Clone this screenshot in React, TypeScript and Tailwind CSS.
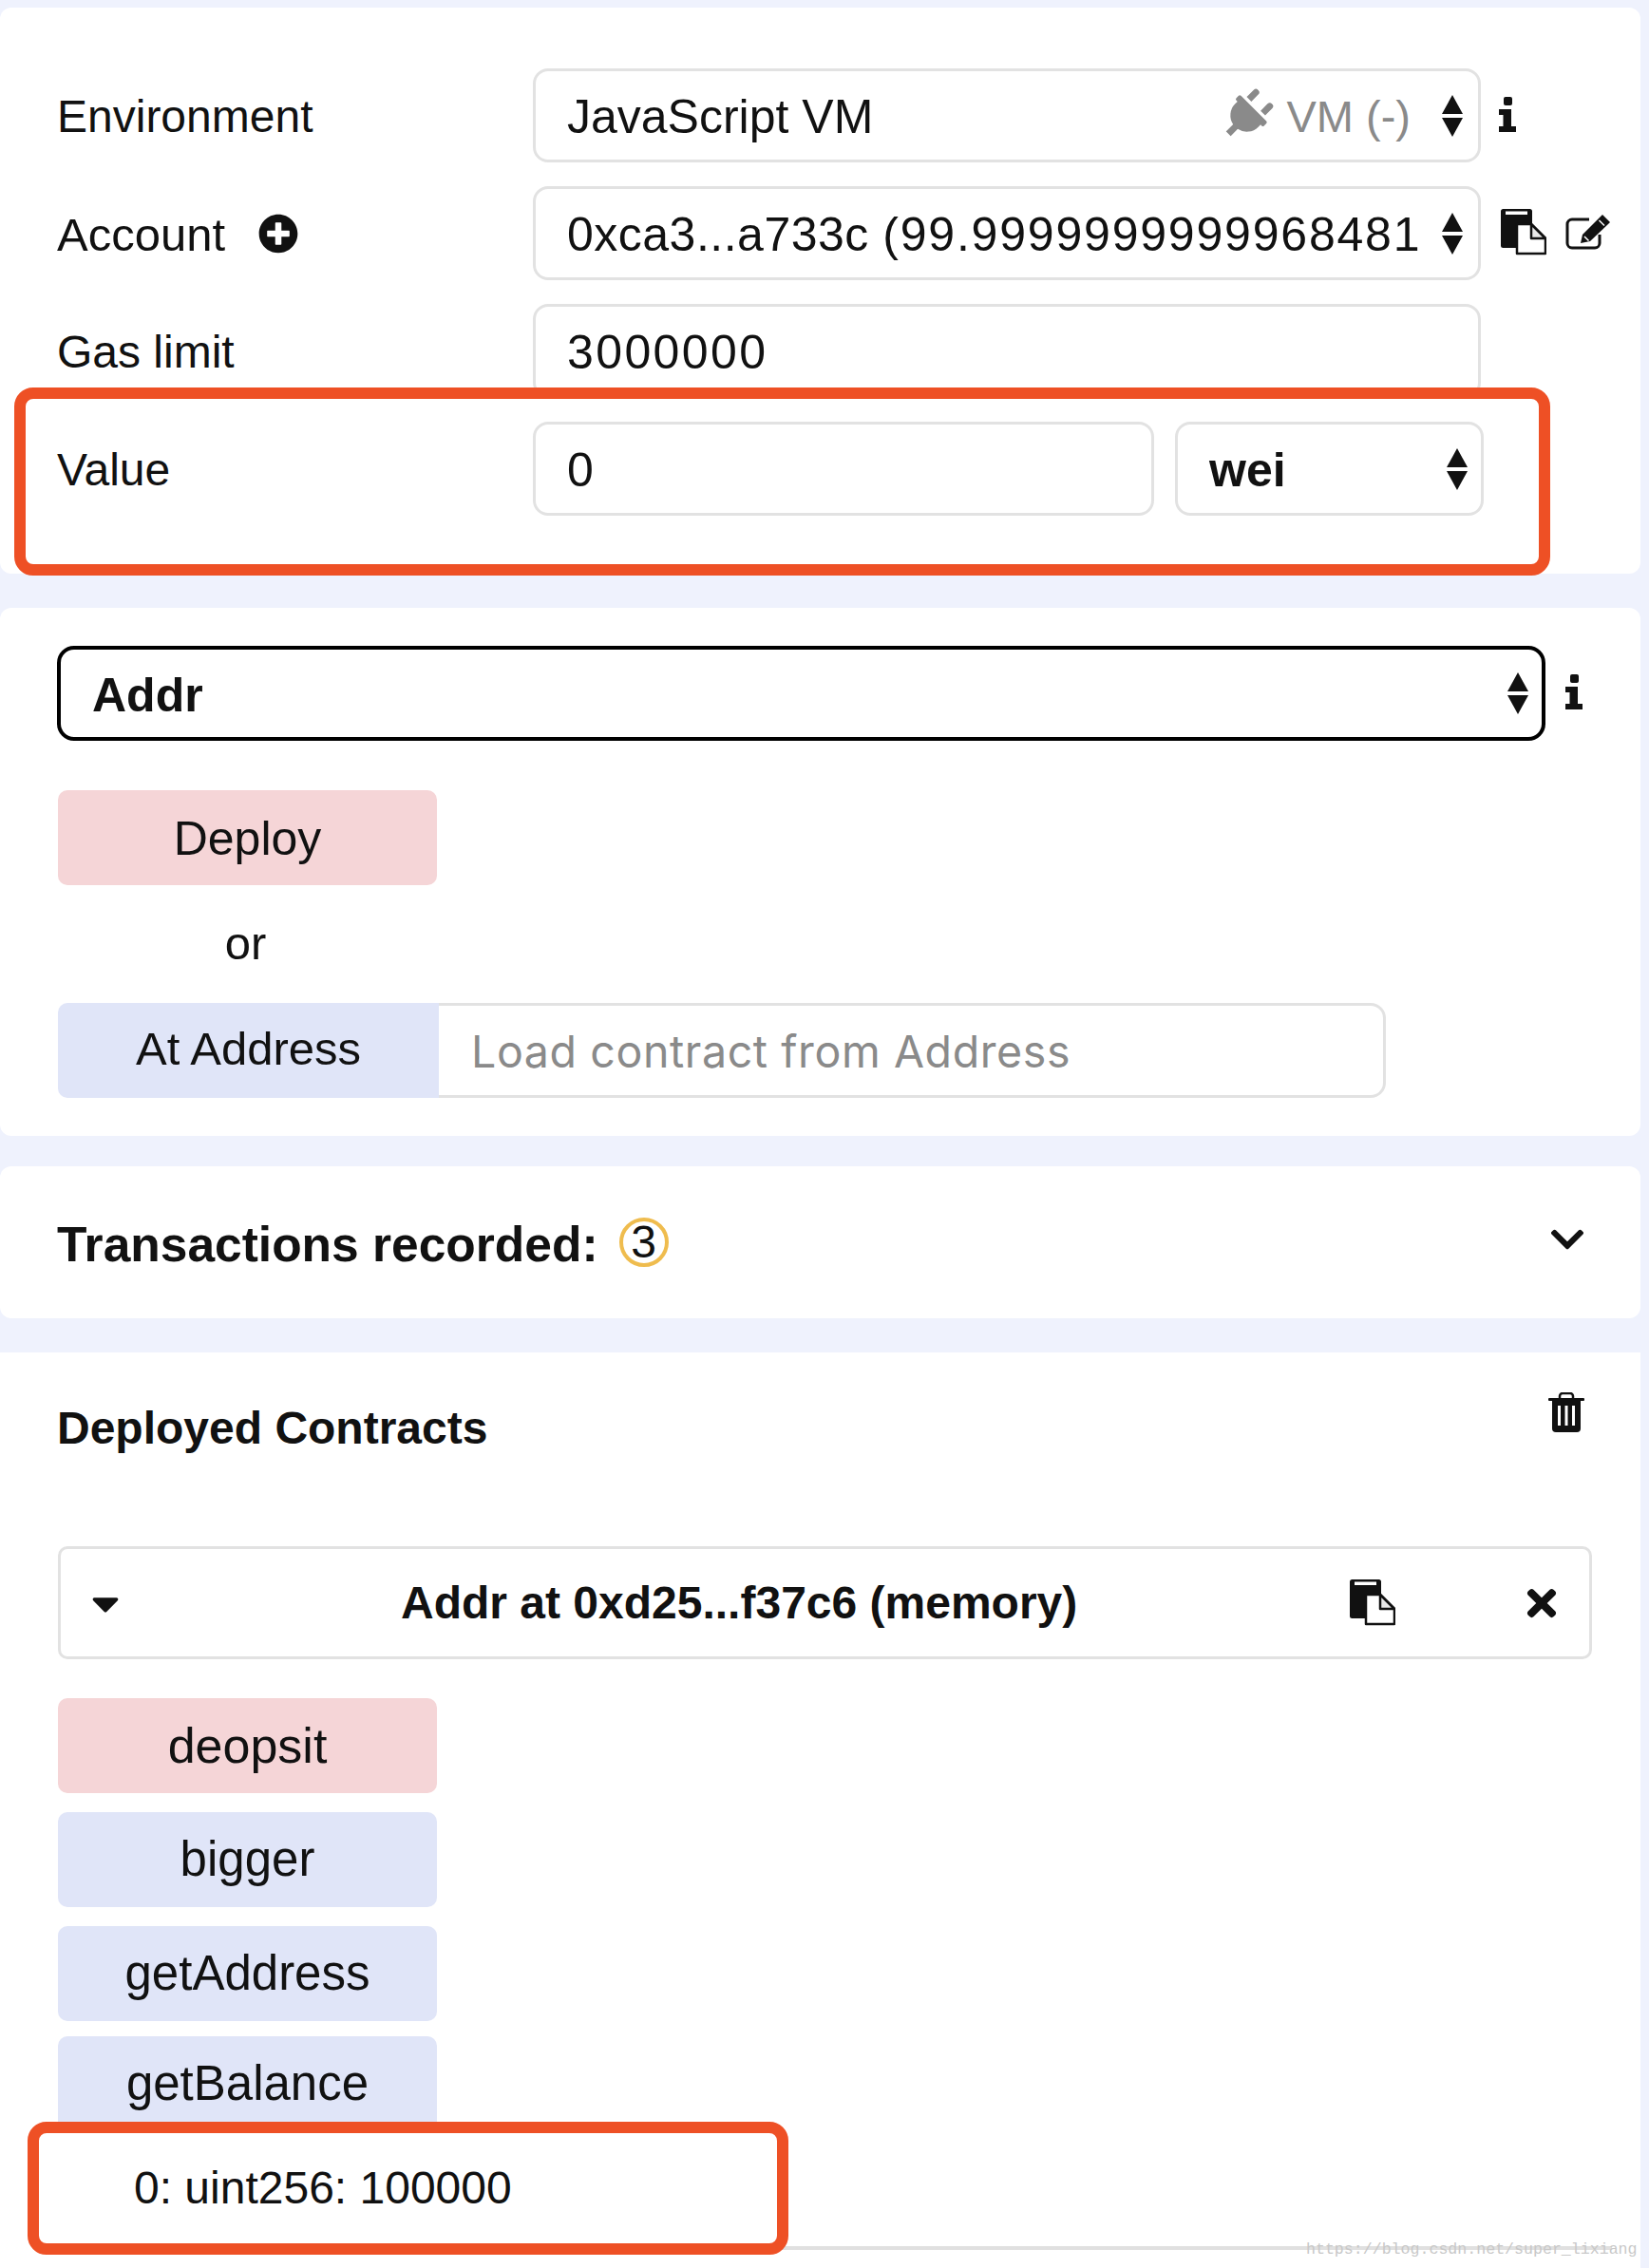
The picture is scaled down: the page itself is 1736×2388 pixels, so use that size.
import React from "react";
import { FaPlug, FaPlusCircle, FaChevronDown, FaTimes, FaCaretDown } from "react-icons/fa";

const Arrows = () => (
  <svg width="22" height="44" viewBox="0 0 22 44" className="shrink-0 -mt-[3px]">
    <path d="M11 0 L22 20 H0 Z M0 24 H22 L11 44 Z" fill="#111" />
  </svg>
);

const InfoIcon = () => (
  <svg width="18" height="37" viewBox="0 0 18 37" className="shrink-0">
    <rect x="5" y="0" width="9" height="9" rx="2" fill="#111" />
    <path d="M0 13 H13 V31 H18 V37 H0 V31 H4.500 V19 H0 Z" fill="#111" />
  </svg>
);

const PasteIcon = () => (
  <svg width="48" height="49" viewBox="0 0 48 49" className="shrink-0">
    <rect x="0" y="0" width="33" height="41" rx="2.500" fill="#111" />
    <rect x="5" y="2.500" width="23" height="3.500" fill="#fff" />
    <path d="M17 16 H32 L47 31 V47 H17 Z" fill="#fff" stroke="#111" strokeWidth="2.500" strokeLinejoin="round" />
    <path d="M32 16 V31 H47 Z" fill="#e8e8e8" stroke="#111" strokeWidth="2.500" strokeLinejoin="round" />
  </svg>
);

const EditIcon = () => (
  <svg width="48" height="38" viewBox="0 0 48 38" className="shrink-0">
    <path d="M25 5 H7 a5 5 0 0 0 -5 5 V30 a5 5 0 0 0 5 5 H31 a5 5 0 0 0 5 -5 V21" fill="none" stroke="#111" strokeWidth="3" />
    <path d="M16 30 L18 21 L37 2 L39 0 L47 8 L45 10 L26 28 Z" fill="#111" />
    <path d="M20 23 L24.500 27.500 M35.500 6 L41 11.500" stroke="#fff" strokeWidth="1.500" />
  </svg>
);

const TrashIcon = () => (
  <svg width="38" height="42" viewBox="0 0 38 42" className="shrink-0">
    <path d="M12 7 V4 a3 3 0 0 1 3 -3 H23 a3 3 0 0 1 3 3 V7" fill="none" stroke="#111" strokeWidth="2.500" />
    <rect x="0" y="6" width="38" height="3" rx="1" fill="#111" />
    <path d="M4 8 H34 V38 a4 4 0 0 1 -4 4 H8 a4 4 0 0 1 -4 -4 Z" fill="#111" />
    <path d="M10 14 H13 V35 H10 Z M17.500 14 H20.500 V35 H17.500 Z M25 14 H28 V35 H25 Z" fill="#fff" />
  </svg>
);

const Label = ({ children }: { children: React.ReactNode }) => (
  <div className="w-[501px] shrink-0 flex items-center pt-[3px]">{children}</div>
);

const boxBase = "h-[99px] pt-[3px] border-[3px] border-[#e2e2e2] rounded-[16px] bg-white text-[50px]";

const SubmitButton = ({ text }: { text: string }) => (
  <button className="w-[399px] h-[100px] ml-[1px] shrink-0 rounded-[10px] flex items-center justify-center pt-[2px] text-[#111] bg-[#f5d5d7] text-[50px]">
    {text}
  </button>
);

const FunctionButton = ({ text, pink }: { text: string; pink?: boolean }) => (
  <button className={pink
    ? "w-[399px] h-[100px] ml-[1px] shrink-0 rounded-[10px] flex items-center justify-center pb-[1px] text-[#111] bg-[#f5d5d7] text-[52px]"
    : "w-[399px] h-[100px] ml-[1px] shrink-0 rounded-[10px] flex items-center justify-center pb-[1px] text-[#111] bg-[#e0e5f8] text-[51px]"}>
    {text}
  </button>
);

export default function App() {
  return (
    <div className="w-[1736px] h-[2388px] overflow-hidden bg-[#eff2fd] pt-[8px] text-[48px] leading-[56px] text-[#111] font-['Liberation_Sans',Arial,sans-serif]">
      <div className="w-[1727px] flex flex-col">
        {/* Settings */}
        <section className="bg-white rounded-[12px] h-[596px] pt-[64px] pl-[60px] flex flex-col gap-[25px]">
          <div className="flex h-[99px]">
            <Label>Environment</Label>
            <div className={`${boxBase} w-[998px] flex items-center pl-[33px] pr-[16px]`}>
              <span>JavaScript VM</span>
              <FaPlug className="ml-auto rotate-45 text-[#8a8a8a] -mt-[3px]" size={55} />
              <span className="ml-[14px] text-[47px] text-[#8a8a8a]">VM (-)</span>
              <span className="ml-[33px] flex"><Arrows /></span>
            </div>
            <div className="ml-[19px] flex items-center -mt-[2px]"><InfoIcon /></div>
          </div>
          <div className="flex h-[99px]">
            <Label>
              <span className="text-[49px]">Account</span>
              <FaPlusCircle size={42} className="ml-[35px] -mt-[3px] text-[#111]" />
            </Label>
            <div className={`${boxBase} w-[998px] flex items-center pl-[33px] pr-[16px]`}>
              <span className="w-[902px] overflow-hidden whitespace-nowrap">
                <span className="tracking-[0.5px]">0xca3...a733c </span>
                <span className="tracking-[1.8px]">(99.9999999999968481</span>
              </span>
              <span className="ml-auto flex"><Arrows /></span>
            </div>
            <div className="ml-[21px] flex items-center gap-[20px] -mt-[2px]">
              <PasteIcon />
              <EditIcon />
            </div>
          </div>
          <div className="flex h-[99px]">
            <Label>Gas limit</Label>
            <input readOnly value="3000000" className={`${boxBase} w-[998px] pl-[33px] outline-none tracking-[2.400px]`} />
          </div>
          <div className="relative flex h-[99px]">
            <div className="absolute left-[-45px] top-[-36px] w-[1617px] h-[198px] border-[12px] border-[#ee5025] rounded-[20px] bg-white"></div>
            <div className="relative flex h-[99px]">
              <Label>Value</Label>
              <input readOnly value="0" className={`${boxBase} w-[654px] pl-[33px] outline-none`} />
              <div className={`${boxBase} w-[325px] ml-[22px] flex items-center pl-[33px] pr-[14px] font-bold`}>
                <span>wei</span>
                <span className="ml-auto flex"><Arrows /></span>
              </div>
            </div>
          </div>
        </section>

        {/* Contract */}
        <section className="mt-[36px] bg-white rounded-[12px] h-[556px] pt-[40px] pl-[60px] flex flex-col">
          <div className="flex items-center">
            <div className="w-[1567px] h-[100px] pt-[3px] border-[4px] border-black rounded-[18px] flex items-center pl-[33px] pr-[14px] font-bold text-[50px]">
              <span>Addr</span>
              <span className="ml-auto flex"><Arrows /></span>
            </div>
            <span className="ml-[21px] -mt-[4px] flex"><InfoIcon /></span>
          </div>
          <div className="mt-[52px]"><SubmitButton text="Deploy" /></div>
          <div className="w-[397px] h-[124px] pb-[2px] text-[49px] flex items-center justify-center">or</div>
          <div className="flex h-[100px] ml-[1px]">
            <button className="w-[401px] h-[100px] rounded-l-[10px] bg-[#e0e5f8] text-[49px] flex items-center justify-center pb-[4px]">At Address</button>
            <input readOnly placeholder="Load contract from Address" className="w-[997px] h-[100px] pl-[34px] pt-[2px] border-[3px] border-l-0 border-[#e2e2e2] rounded-r-[16px] outline-none tracking-[0.6px] font-['Inter','Liberation_Sans',sans-serif] text-[46.500px] placeholder:text-[#8a8a8a]" />
          </div>
        </section>

        {/* Transactions */}
        <section className="mt-[32px] bg-white rounded-[12px] h-[160px] pl-[60px] pr-[57px] flex items-center">
          <span className="font-bold text-[51.500px] pt-[4px]">Transactions recorded:</span>
          <span className="ml-[22px] w-[52px] h-[52px] rounded-full border-[4px] border-[#efbc4e] flex items-center justify-center">3</span>
          <FaChevronDown size={40} className="ml-auto -mt-[6px] text-[#111]" />
        </section>

        {/* Deployed */}
        <section className="relative mt-[36px] bg-white h-[964px] pl-[60px] flex flex-col">
          <div className="h-[204px] flex items-start">
            <span className="font-bold mt-[52px]">Deployed Contracts</span>
            <span className="ml-auto mr-[59px] mt-[42px] flex"><TrashIcon /></span>
          </div>
          <div className="w-[1615px] ml-[1px] shrink-0 h-[119px] border-[3px] border-[#e2e2e2] rounded-[10px] flex items-center pl-[24px] font-bold">
            <FaCaretDown size={46} className="shrink-0 text-[#111]" />
            <span className="ml-[288px]">Addr at 0xd25...f37c6 (memory)</span>
            <span className="ml-auto flex"><PasteIcon /></span>
            <FaTimes size={44} className="ml-[132px] mr-[28px] text-[#111]" />
          </div>
          <div className="mt-[41px] w-[1637px] h-[581px] shrink-0 border-b-[4px] border-[#e0e0e0] flex flex-col">
            <FunctionButton text="deopsit" pink />
            <div className="mt-[20px]"><FunctionButton text="bigger" /></div>
            <div className="mt-[20px]"><FunctionButton text="getAddress" /></div>
            <div className="mt-[16px]"><FunctionButton text="getBalance" /></div>
            <div className="relative -mt-[10px] -ml-[31px] w-[801px] h-[140px] shrink-0 border-[12px] border-[#ee5025] rounded-[20px] bg-white flex items-center pl-[100px]">
              0: uint256: 100000
            </div>
          </div>
          <span className="absolute left-[1375px] top-[934px] text-[16.600px] leading-[22px] text-[#c8c8c8] font-['Liberation_Mono',monospace] whitespace-nowrap">https://blog.csdn.net/super_lixiang</span>
        </section>
      </div>
    </div>
  );
}
